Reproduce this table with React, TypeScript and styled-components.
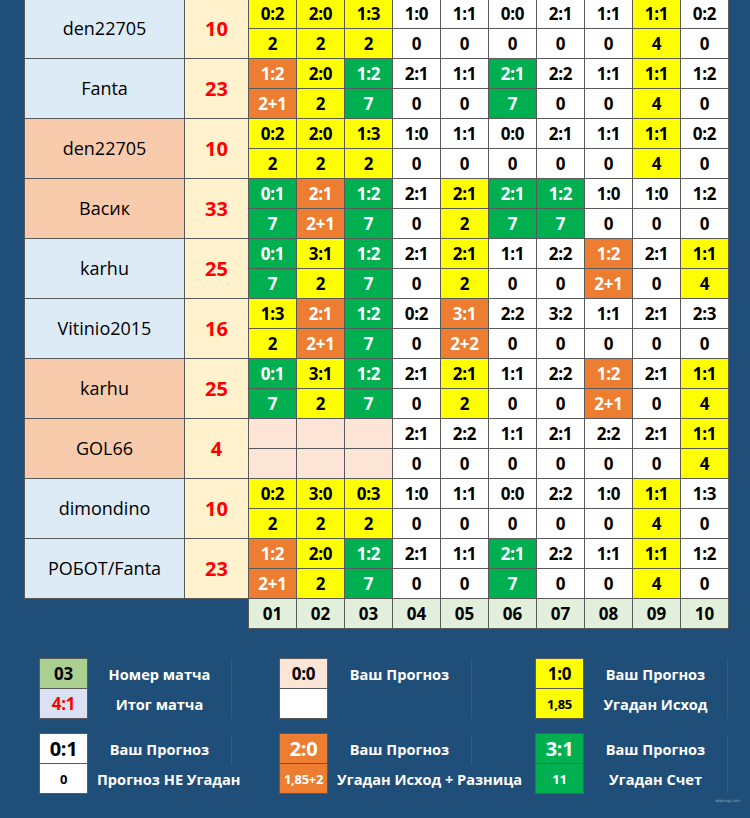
import styled, { createGlobalStyle } from 'styled-components';

type Tone = 'Y' | 'O' | 'G' | 'W' | 'E';

interface Player {
    name: string
    total: number
    peach: boolean
    picks: string
}

const FANTA = 'O1:2/2+1 Y2:0/2 G1:2/7 W2:1/0 W1:1/0 G2:1/7 W2:2/0 W1:1/0 Y1:1/4 W1:2/0';
const DEN = 'Y0:2/2 Y2:0/2 Y1:3/2 W1:0/0 W1:1/0 W0:0/0 W2:1/0 W1:1/0 Y1:1/4 W0:2/0';
const KARHU = 'G0:1/7 Y3:1/2 G1:2/7 W2:1/0 Y2:1/2 W1:1/0 W2:2/0 O1:2/2+1 W2:1/0 Y1:1/4';

const players: Player[] = [
    { name: 'den22705', total: 10, peach: false, picks: DEN },
    { name: 'Fanta', total: 23, peach: false, picks: FANTA },
    { name: 'den22705', total: 10, peach: true, picks: DEN },
    { name: 'Васик', total: 33, peach: true, picks: 'G0:1/7 O2:1/2+1 G1:2/7 W2:1/0 Y2:1/2 G2:1/7 G1:2/7 W1:0/0 W1:0/0 W1:2/0' },
    { name: 'karhu', total: 25, peach: false, picks: KARHU },
    { name: 'Vitinio2015', total: 16, peach: false, picks: 'Y1:3/2 O2:1/2+1 G1:2/7 W0:2/0 O3:1/2+2 W2:2/0 W3:2/0 W1:1/0 W2:1/0 W2:3/0' },
    { name: 'karhu', total: 25, peach: true, picks: KARHU },
    { name: 'GOL66', total: 4, peach: true, picks: 'E/ E/ E/ W2:1/0 W2:2/0 W1:1/0 W2:1/0 W2:2/0 W2:1/0 Y1:1/4' },
    { name: 'dimondino', total: 10, peach: false, picks: 'Y0:2/2 Y3:0/2 Y0:3/2 W1:0/0 W1:1/0 W0:0/0 W2:2/0 W1:0/0 Y1:1/4 W1:3/0' },
    { name: 'РОБОТ/Fanta', total: 23, peach: false, picks: FANTA },
];

const parsePicks = (picks: string) =>
    picks.split(' ').map((p) => {
        const tone = p[0] as Tone;
        const [score, points] = p.slice(1).split('/');
        return { tone, score, points };
    });

const toneBg: Record<Tone, string> = {
    Y: '#ffff00',
    O: '#ed7d31',
    G: '#00b050',
    W: '#ffffff',
    E: '#fce4d6',
};

const toneInk: Record<Tone, string> = {
    Y: '#000000',
    O: '#ffffff',
    G: '#ffffff',
    W: '#000000',
    E: '#000000',
};

const GlobalStyle = createGlobalStyle`
    body {
        margin: 0;
        background: #1f4e79;
        font-family: "Open Sans", "Noto Sans", sans-serif;
    }
`;

export default function App(): JSX.Element {
    return (
        <Page>
            <GlobalStyle />
            <Table>
                {players.map((pl, i) => (
                    <PlayerBlock key={i} pl={pl} />
                ))}
            </Table>
            <Footer>
                {Array.from({ length: 10 }, (_, i) => (
                    <MatchNo key={i}>{String(i + 1).padStart(2, '0')}</MatchNo>
                ))}
            </Footer>

            <LegendGroup>
                <LegendBox top={{ text: '03', bg: '#a9d08e' }} bottom={{ text: '4:1', bg: '#d9e1f2', ink: '#ff0000', big: true }} />
                <LabelStack>
                    <Label $line>Номер матча</Label>
                    <Label $line>Итог матча</Label>
                </LabelStack>
                <Spacer />
                <LegendBox top={{ text: '0:0', bg: '#fce4d6' }} bottom={{ text: '', bg: '#ffffff' }} />
                <LabelStack>
                    <Label $line>Ваш Прогноз</Label>
                    <Label $line />
                </LabelStack>
                <Spacer $wide />
                <LegendBox top={{ text: '1:0', bg: '#ffff00' }} bottom={{ text: '1,85', bg: '#ffff00' }} />
                <LabelStack>
                    <Label $line>Ваш Прогноз</Label>
                    <Label $line>Угадан Исход</Label>
                </LabelStack>
            </LegendGroup>

            <LegendGroup $second>
                <LegendBox top={{ text: '0:1', bg: '#ffffff', large: true }} bottom={{ text: '0', bg: '#ffffff' }} />
                <LabelStack>
                    <Label $line>Ваш Прогноз</Label>
                    <Label $left>Прогноз НЕ Угадан</Label>
                </LabelStack>
                <Spacer />
                <LegendBox top={{ text: '2:0', bg: '#ed7d31', ink: '#ffffff', large: true }} bottom={{ text: '1,85+2', bg: '#ed7d31', ink: '#ffffff' }} />
                <LabelStack>
                    <Label $line>Ваш Прогноз</Label>
                    <Label $left>Угадан Исход + Разница</Label>
                </LabelStack>
                <Spacer $wide />
                <LegendBox top={{ text: '3:1', bg: '#00b050', ink: '#ffffff', large: true }} bottom={{ text: '11', bg: '#00b050', ink: '#ffffff' }} />
                <LabelStack>
                    <Label $line>Ваш Прогноз</Label>
                    <Label $line>Угадан Счет</Label>
                </LabelStack>
            </LegendGroup>

            <Watermark>dopnog.com</Watermark>
        </Page>
    );
}

function PlayerBlock({ pl }: { pl: Player }): JSX.Element {
    const picks = parsePicks(pl.picks);
    return (
        <>
            <NameCell $peach={pl.peach}>{pl.name}</NameCell>
            <TotalCell>{pl.total}</TotalCell>
            {picks.map((p, i) => (
                <PickCell key={'s' + i} $tone={p.tone}>{p.score}</PickCell>
            ))}
            {picks.map((p, i) => (
                <PickCell key={'p' + i} $tone={p.tone}>{p.points}</PickCell>
            ))}
        </>
    );
}

interface BoxPart {
    text: string
    bg: string
    ink?: string
    big?: boolean
    large?: boolean
}

function LegendBox({ top, bottom }: { top: BoxPart, bottom: BoxPart }): JSX.Element {
    return (
        <BoxFrame>
            <BoxCell $bg={top.bg} $ink={top.ink} $size={top.large ? 20 : 17}>{top.text}</BoxCell>
            <BoxCell $bg={bottom.bg} $ink={bottom.ink} $size={bottom.big ? 17 : 13}>{bottom.text}</BoxCell>
        </BoxFrame>
    );
}

const Page = styled.div`
    position: relative;
    min-height: 818px;
    padding-left: 24px;
    margin-top: -2px;
    overflow: hidden;
`;

const Table = styled.div`
    display: grid;
    grid-template-columns: 159px 63px repeat(10, 47px);
    grid-auto-rows: 29px;
    gap: 1px;
    padding: 1px;
    width: max-content;
    background: #595959;
`;

const NameCell = styled.div<{ $peach: boolean }>`
    grid-row: span 2;
    display: flex;
    align-items: center;
    justify-content: center;
    background: ${(p) => (p.$peach ? '#f8cbad' : '#ddebf7')};
    color: #000;
    font-size: 18px;
    padding-bottom: 2px;
`;

const TotalCell = styled.div`
    grid-row: span 2;
    grid-column: 2;
    display: flex;
    align-items: center;
    justify-content: center;
    background: #fff2cc;
    color: #ff0000;
    font-size: 20px;
    font-weight: 700;
`;

const PickCell = styled.div<{ $tone: Tone }>`
    display: flex;
    align-items: center;
    justify-content: center;
    background: ${(p) => toneBg[p.$tone]};
    color: ${(p) => toneInk[p.$tone]};
    font-size: 17px;
    font-weight: 700;
    letter-spacing: -0.2px;
`;

const Footer = styled.div`
    display: grid;
    grid-template-columns: repeat(10, 47px);
    grid-auto-rows: 29px;
    gap: 1px;
    padding: 0 1px 1px;
    margin-left: 224px;
    width: max-content;
    background: #595959;
`;

const MatchNo = styled.div`
    display: flex;
    align-items: center;
    justify-content: center;
    background: #e2efda;
    color: #000;
    font-size: 17px;
    font-weight: 700;
`;

const LegendGroup = styled.div<{ $second?: boolean }>`
    display: flex;
    margin-top: ${(p) => (p.$second ? '14px' : '29px')};
    margin-left: 15px;
`;

const BoxFrame = styled.div`
    display: grid;
    grid-template-rows: 29px 29px;
    gap: 1px;
    width: 47px;
    padding: 1px;
    background: #595959;
    flex-shrink: 0;
`;

const BoxCell = styled.div<{ $bg: string, $ink?: string, $size: number }>`
    display: flex;
    align-items: center;
    justify-content: center;
    background: ${(p) => p.$bg};
    color: ${(p) => p.$ink ?? '#000'};
    font-size: ${(p) => p.$size}px;
    font-weight: 700;
    letter-spacing: -0.3px;
    white-space: nowrap;
`;

const LabelStack = styled.div`
    display: grid;
    grid-template-columns: 144px;
    grid-template-rows: 30px 30px;
    width: 144px;
    flex-shrink: 0;
    padding-top: 1px;
`;

const Label = styled.div<{ $line?: boolean, $left?: boolean }>`
    display: flex;
    align-items: center;
    justify-content: ${(p) => (p.$left ? 'flex-start' : 'center')};
    padding-left: ${(p) => (p.$left ? '9px' : '0')};
    border-right: 1px solid ${(p) => (p.$line ? '#5a4f4a' : 'transparent')};
    color: #fff;
    font-size: 14.6px;
    font-weight: 700;
    white-space: nowrap;
    min-width: 0;
`;

const Spacer = styled.div<{ $wide?: boolean }>`
    width: ${(p) => (p.$wide ? '63px' : '47px')};
    flex-shrink: 0;
`;

const Watermark = styled.div`
    position: absolute;
    right: 10px;
    bottom: 13px;
    font-family: "DejaVu Sans", sans-serif;
    font-size: 4px;
    color: #8ea9c8;
`;
